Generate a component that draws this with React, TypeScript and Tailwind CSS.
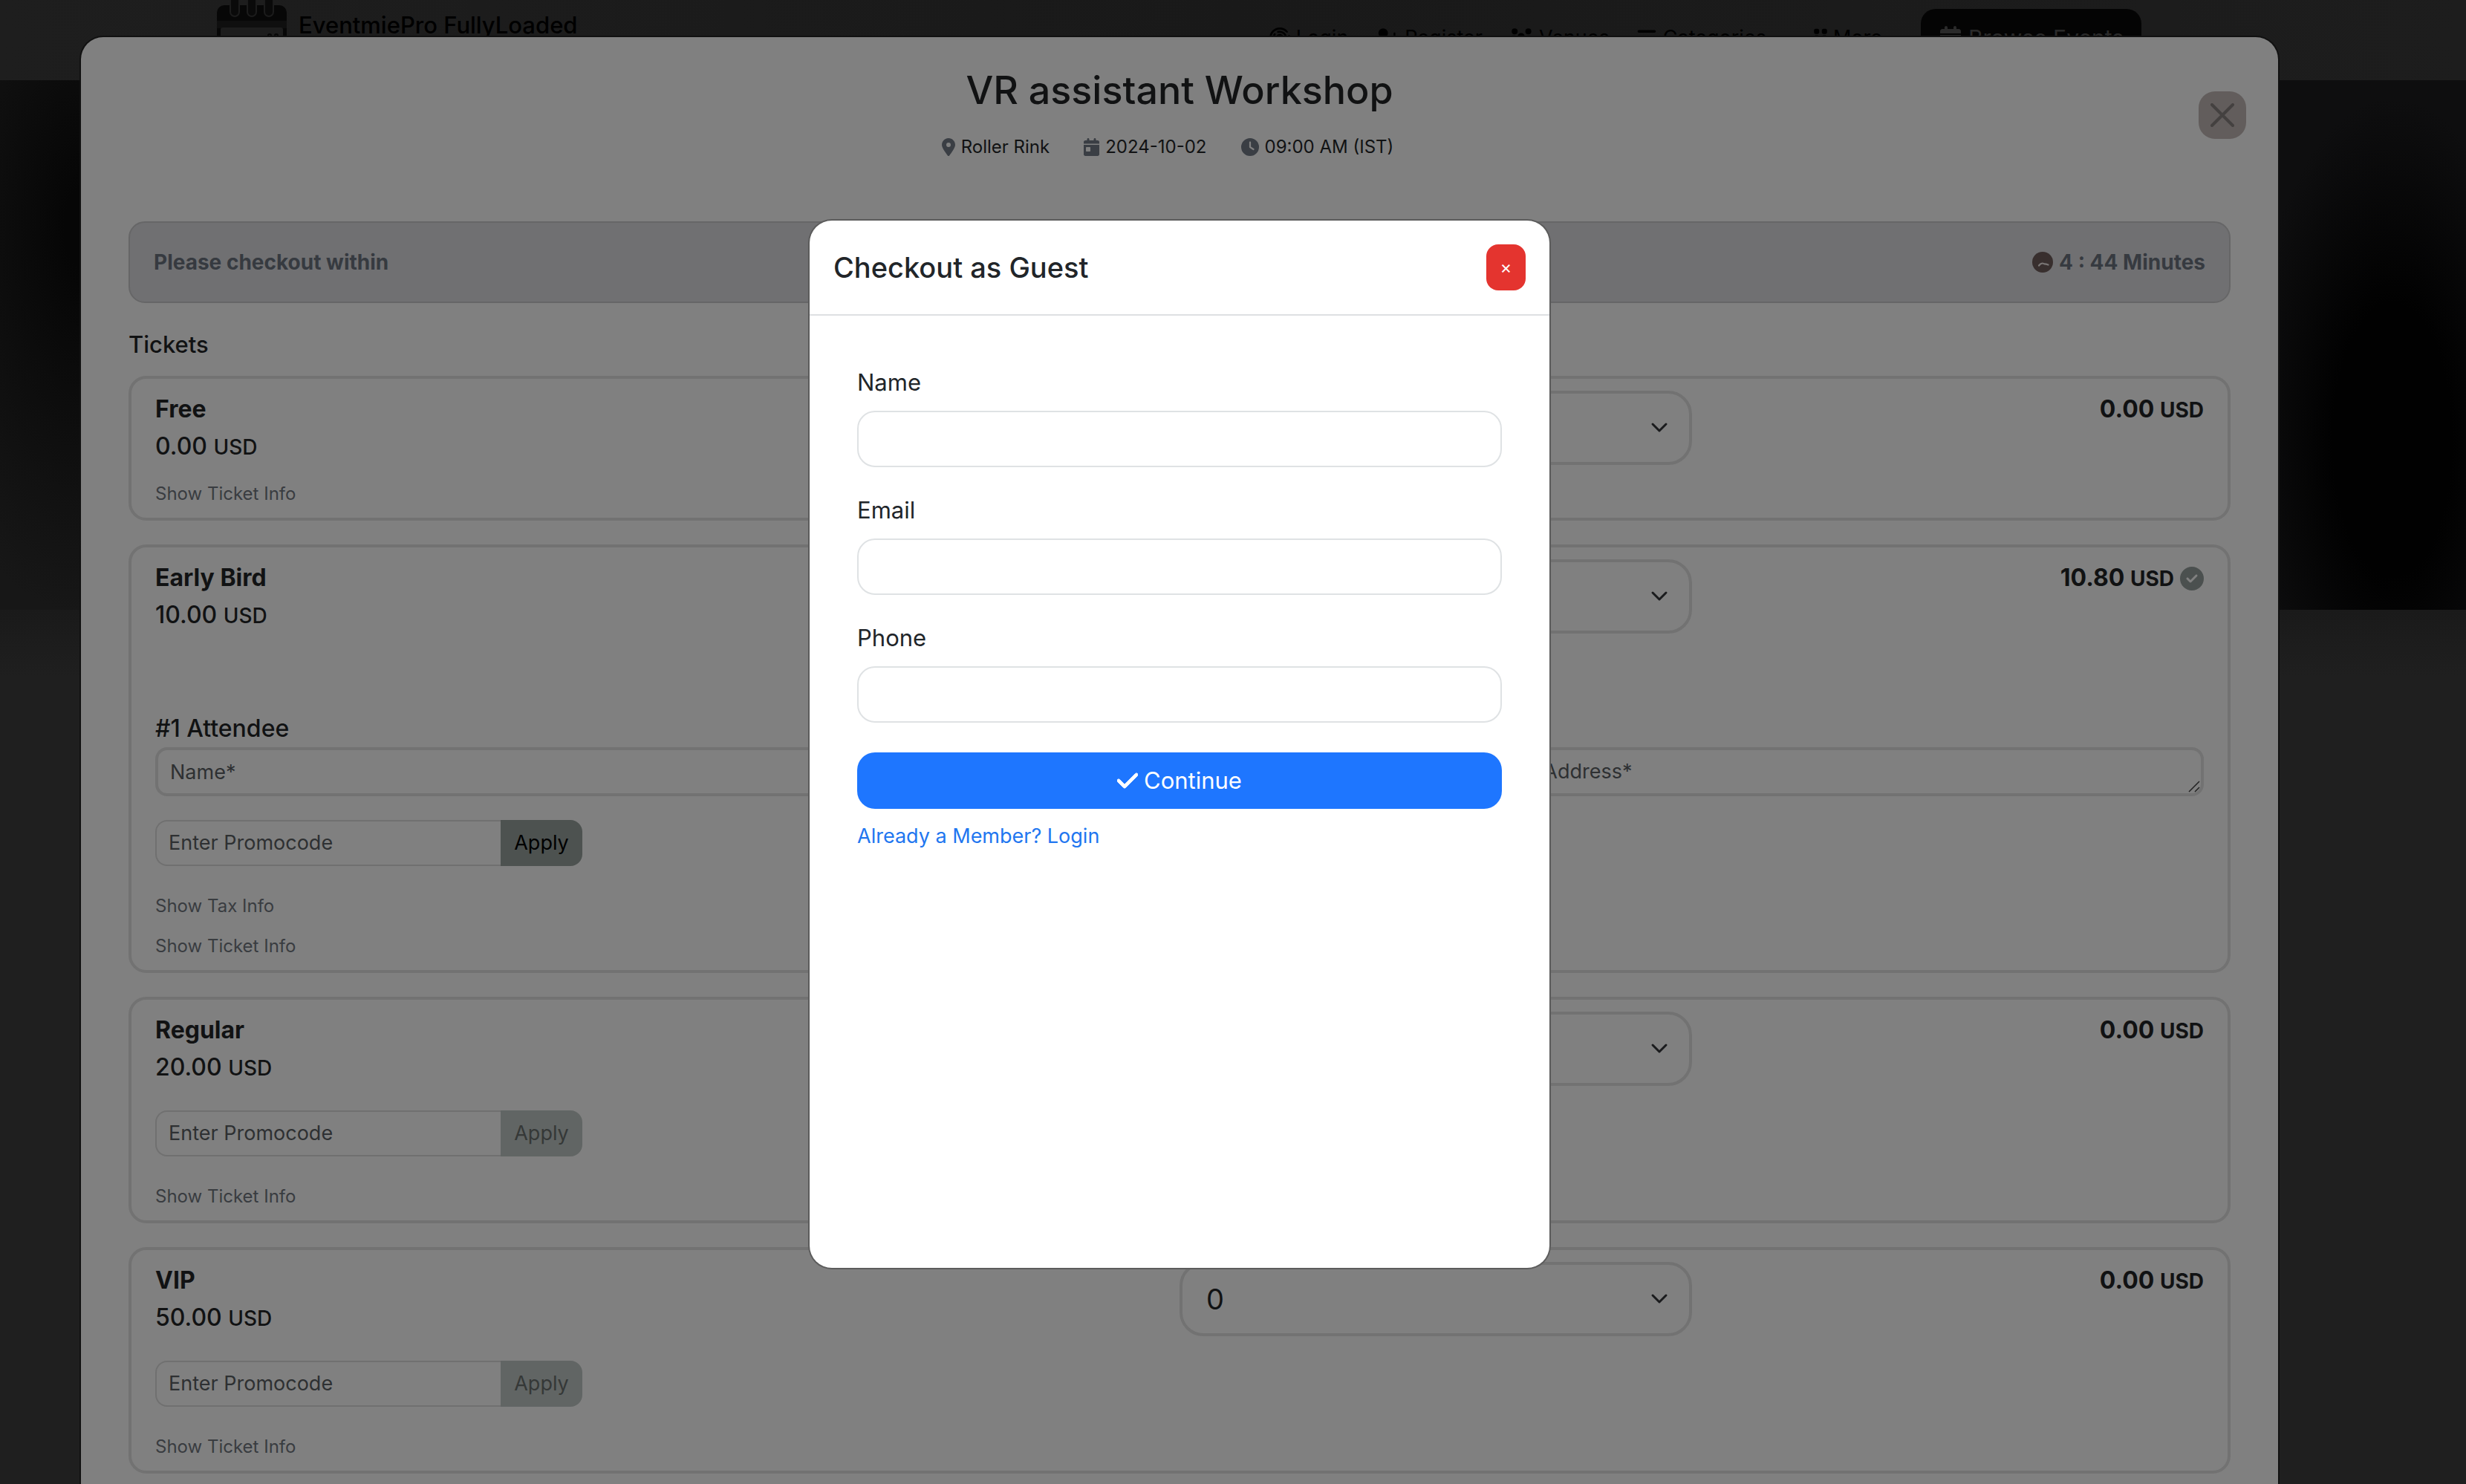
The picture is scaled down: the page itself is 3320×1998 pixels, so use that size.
import { useId, type ReactNode } from "react";
import {
  FaBars,
  FaCalendarDay,
  FaCaretDown,
  FaCheck,
  FaCircleCheck,
  FaClock,
  FaFingerprint,
  FaGripVertical,
  FaLocationDot,
  FaUserPlus,
  FaUsers,
} from "react-icons/fa6";

type Ticket = {
  name: string;
  price: string;
  total: string;
  quantity: string;
  promo?: "active" | "disabled";
  taxed?: boolean;
};

const tickets: Ticket[] = [
  { name: "Free", price: "0.00", total: "0.00", quantity: "0" },
  { name: "Early Bird", price: "10.00", total: "10.80", quantity: "1", promo: "active", taxed: true },
  { name: "Regular", price: "20.00", total: "0.00", quantity: "0", promo: "disabled" },
  { name: "VIP", price: "50.00", total: "0.00", quantity: "0", promo: "disabled" },
];

function NavLink({ icon, label, caret }: { icon: ReactNode; label: string; caret?: boolean }) {
  return (
    <a href="#" className="flex items-center gap-2 text-[27px] leading-10">
      {icon}
      {label}
      {caret && <FaCaretDown className="size-5" />}
    </a>
  );
}

function Logo() {
  return (
    <svg viewBox="0 0 94 96" className="h-24 w-[94px] shrink-0" aria-hidden="true">
      <rect x="0" y="7" width="94" height="89" rx="10" fill="#070707" />
      <rect x="0" y="28" width="94" height="10" fill="#0f0f0f" />
      <rect x="5" y="37" width="84" height="55" rx="3" fill="#1d1d1d" />
      {[24, 47, 70].map((x) => (
        <g key={x}>
          <rect x={x - 7} y="-10" width="14" height="33" rx="7" fill="#1c1c1c" />
          <rect x={x - 5} y="-10" width="10" height="31" rx="5" fill="#0a0a0a" />
        </g>
      ))}
      <circle cx="71" cy="48" r="2" fill="none" stroke="#070707" strokeWidth="2" />
      <circle cx="80" cy="48" r="2" fill="none" stroke="#070707" strokeWidth="2" />
    </svg>
  );
}

function SiteBackground() {
  return (
    <div className="absolute inset-0 flex flex-col bg-[#1f1f1f]">
      <header className="flex h-[108px] shrink-0 items-start justify-between bg-linear-to-r from-[#1e1e1e] via-[#191919] to-[#1d1d1d] pr-[437px] pl-[292px] text-black">
        <a href="#" className="flex items-start gap-4">
          <Logo />
          <span className="mt-[10px] text-[31px] leading-12 font-medium">EventmiePro FullyLoaded</span>
        </a>
        <nav className="mt-3 flex items-center gap-9">
          <NavLink icon={<FaFingerprint className="size-7" />} label="Login" />
          <NavLink icon={<FaUserPlus className="size-8" />} label="Register" />
          <NavLink icon={<FaUsers className="size-8" />} label="Venues" />
          <NavLink icon={<FaBars className="size-7" />} label="Categories" caret />
          <div className="-mr-3">
            <NavLink icon={<FaGripVertical className="h-7 w-[18px]" />} label="More" caret />
          </div>
          <a
            href="#"
            className="flex h-[78px] items-center gap-2 rounded-[20px] bg-[#040404] px-6 text-[30px] text-[#2a2a2a]"
          >
            <FaCalendarDay className="size-8" />
            Browse Events
          </a>
        </nav>
      </header>
      <div className="flex h-[713px] shrink-0 justify-between bg-[#0a0a0a]">
        <div className="w-28 bg-radial-[240px_520px_at_100%_28%] from-[#060606] from-10% to-[#171717]" />
        <div className="w-[260px] bg-radial-[200px_460px_at_62%_68%] from-[#010101] from-40% to-[#0e0e0f]" />
      </div>
      <div className="h-[90px] shrink-0 bg-linear-to-b from-[#1a1a1a] to-[#1f1f1f]" />
    </div>
  );
}

function Money({ amount }: { amount: string }) {
  return (
    <span>
      {amount} <span className="text-[28px]">USD</span>
    </span>
  );
}

function QuantitySelect({ name, value }: { name: string; value: string }) {
  return (
    <div className="relative">
      <select
        aria-label={`${name} quantity`}
        defaultValue={value}
        className="h-[100px] w-full appearance-none rounded-[32px] border-4 border-[#727272] bg-transparent px-8 text-[38px] text-[#111213]"
      >
        {["0", "1", "2", "3", "4", "5"].map((n) => (
          <option key={n}>{n}</option>
        ))}
      </select>
      <svg
        viewBox="0 0 24 16"
        className="pointer-events-none absolute top-[42px] right-8 h-4 w-6"
        fill="none"
        stroke="#1a1b1d"
        strokeWidth="3"
        strokeLinecap="round"
        strokeLinejoin="round"
        aria-hidden="true"
      >
        <path d="M3 3l9 9 9-9" />
      </svg>
    </div>
  );
}

function PromoField({ disabled }: { disabled: boolean }) {
  return (
    <form className="mt-8 flex h-[62px] w-[575px]" onSubmit={(e) => e.preventDefault()}>
      <input
        type="text"
        aria-label="Promocode"
        placeholder="Enter Promocode"
        className="min-w-0 flex-1 rounded-l-2xl border-2 border-r-0 border-[#707070] bg-transparent px-4 text-[27px] placeholder:text-[#2e3032]"
      />
      <button
        type="submit"
        disabled={disabled}
        className="w-[110px] rounded-r-2xl bg-[#4d5250] text-[27px] text-black disabled:bg-[#616564] disabled:text-[#353837]"
      >
        Apply
      </button>
    </form>
  );
}

const attendeeField =
  "block h-[66px] w-full rounded-2xl border-4 border-[#727272] bg-transparent px-4 text-[27px] placeholder:text-[#2e3032]";

function AttendeeFields() {
  return (
    <fieldset className="mt-[102px]">
      <legend className="text-[32px] leading-[50px] font-medium">#1 Attendee</legend>
      <div className="grid grid-cols-3 gap-4">
        <input type="text" aria-label="Attendee name" placeholder="Name*" className={attendeeField} />
        <input type="text" aria-label="Attendee phone" placeholder="Phone*" className={attendeeField} />
        <div className="relative">
          <textarea
            aria-label="Attendee address"
            placeholder="Address*"
            rows={1}
            className={`${attendeeField} resize-none py-[9px] leading-10`}
          />
          <svg
            viewBox="0 0 20 20"
            className="pointer-events-none absolute right-1 bottom-1 size-5"
            stroke="#222"
            strokeWidth="1.5"
            aria-hidden="true"
          >
            <path d="M4 18L18 4M12 18l6-6" />
          </svg>
        </div>
      </div>
    </fieldset>
  );
}

const infoButton = "block text-[24px] leading-10 text-[#393c40]";

function TicketCard({ ticket }: { ticket: Ticket }) {
  return (
    <li className="rounded-[24px] border-4 border-[#727272] px-8 pt-4 pb-3">
      <div className="grid grid-cols-4">
        <div className="col-span-2 text-[32px] leading-[50px]">
          <h3 className="font-bold">{ticket.name}</h3>
          <p className="font-medium">
            <Money amount={ticket.price} />
          </p>
        </div>
        <QuantitySelect name={ticket.name} value={ticket.quantity} />
        <p className="flex items-center justify-end gap-2 self-start text-[32px] leading-[50px] font-bold">
          <Money amount={ticket.total} />
          {ticket.taxed && <FaCircleCheck className="size-8 text-[#4b504f]" />}
        </p>
      </div>
      {ticket.taxed && <AttendeeFields />}
      {ticket.promo && <PromoField disabled={ticket.promo === "disabled"} />}
      <div className={ticket.promo ? "mt-[34px] space-y-[14px]" : "mt-[18px]"}>
        {ticket.taxed && (
          <button type="button" className={infoButton}>
            Show Tax Info
          </button>
        )}
        <button type="button" className={infoButton}>
          Show Ticket Info
        </button>
      </div>
    </li>
  );
}

function CheckoutDialog() {
  return (
    <section
      aria-labelledby="event-title"
      className="min-h-full rounded-t-[30px] bg-[#808080] px-16 pb-16 text-[#111213] shadow-[0_0_0_2px_#111]"
    >
      <div className="grid grid-cols-[1fr_auto_1fr]">
        <div className="col-start-2 pt-[38px] text-center">
          <h1 id="event-title" className="text-[52px] leading-[68px] font-medium">
            VR assistant Workshop
          </h1>
          <ul className="mt-[22px] flex justify-center gap-[46px] pr-8 text-[24px] leading-10">
            <li className="flex items-center gap-2">
              <FaLocationDot className="h-6 w-[18px] text-[#3a3e44]" />
              Roller Rink
            </li>
            <li className="flex items-center gap-2">
              <FaCalendarDay className="h-6 w-[21px] text-[#3a3e44]" />
              2024-10-02
            </li>
            <li className="flex items-center gap-2">
              <FaClock className="size-6 text-[#3a3e44]" />
              09:00 AM (IST)
            </li>
          </ul>
        </div>
        <button
          type="button"
          aria-label="Close checkout"
          className="mt-[73px] -mr-[21px] flex size-16 items-center justify-center justify-self-end rounded-[22px] bg-[#625d5c]"
        >
          <svg viewBox="0 0 32 32" className="size-8" stroke="#444140" strokeWidth="4" strokeLinecap="round" aria-hidden="true">
            <path d="M2 2l28 28M30 2L2 30" />
          </svg>
        </button>
      </div>

      <div className="mt-20 flex h-[110px] items-center justify-between rounded-[22px] border-2 border-[#666667] bg-[#707072] px-8 text-[28px] font-bold text-[#363a40]">
        <p>Please checkout within</p>
        <p className="flex items-center gap-2">
          <svg viewBox="0 0 28 28" className="size-7" aria-hidden="true">
            <circle cx="14" cy="14" r="14" fill="#382f2e" />
            <path
              d="M9 18.500c1.500-2 3-3 5-3 1 0 1.500.8 2.500.8 1.500 0 3 .4 5 1.200"
              fill="none"
              stroke="#7a7675"
              strokeWidth="2.200"
              strokeLinecap="round"
            />
          </svg>
          4 : 44 Minutes
        </p>
      </div>

      <h2 className="mt-8 text-[31px] leading-12 font-medium">Tickets</h2>
      <ul className="mt-[18px] space-y-8">
        {tickets.map((ticket) => (
          <TicketCard key={ticket.name} ticket={ticket} />
        ))}
      </ul>
    </section>
  );
}

function GuestField({ label, type }: { label: string; type: string }) {
  const id = useId();
  return (
    <div>
      <label htmlFor={id} className="block pt-0.5 text-[31px] leading-12">
        {label}
      </label>
      <input
        id={id}
        type={type}
        className="mt-[14px] block h-[76px] w-full rounded-[24px] border-2 border-[#dfe2e4] bg-white px-6 text-[31px]"
      />
    </div>
  );
}

function GuestDialog() {
  return (
    <section
      role="dialog"
      aria-labelledby="guest-title"
      className="min-h-[1410px] w-[996px] rounded-[30px] bg-white text-[#212529] shadow-[0_0_0_2px_#5c5c5c]"
    >
      <header className="flex h-32 items-center justify-between border-b-2 border-[#dee0e2] px-8">
        <h2 id="guest-title" className="text-[38px] leading-[60px] font-medium">
          Checkout as Guest
        </h2>
        <button
          type="button"
          aria-label="Close"
          className="h-[62px] w-[53px] rounded-2xl bg-[#e4342f] text-2xl text-white"
        >
          ×
        </button>
      </header>
      <form className="px-16 pt-16" onSubmit={(e) => e.preventDefault()}>
        <div className="space-y-8">
          <GuestField label="Name" type="text" />
          <GuestField label="Email" type="email" />
          <GuestField label="Phone" type="tel" />
        </div>
        <button
          type="submit"
          className="mt-10 flex h-[76px] w-full items-center justify-center gap-2 rounded-[24px] bg-[#1e76ff] text-[31px] text-white"
        >
          <FaCheck className="h-8 w-7" strokeWidth="16" stroke="currentColor" />
          Continue
        </button>
        <a href="#" className="mt-4 inline-block text-[27px] leading-[42px] text-[#2176f0]">
          Already a Member? Login
        </a>
      </form>
    </section>
  );
}

export default function App() {
  return (
    <div className="relative h-screen overflow-hidden font-['Inter',sans-serif]">
      <SiteBackground />
      <div className="absolute inset-0 overflow-hidden pt-[50px] pr-[253px] pl-[109px]">
        <CheckoutDialog />
      </div>
      <div className="absolute inset-0 flex items-start justify-center pt-[297px] pr-[253px] pl-[109px]">
        <GuestDialog />
      </div>
    </div>
  );
}
